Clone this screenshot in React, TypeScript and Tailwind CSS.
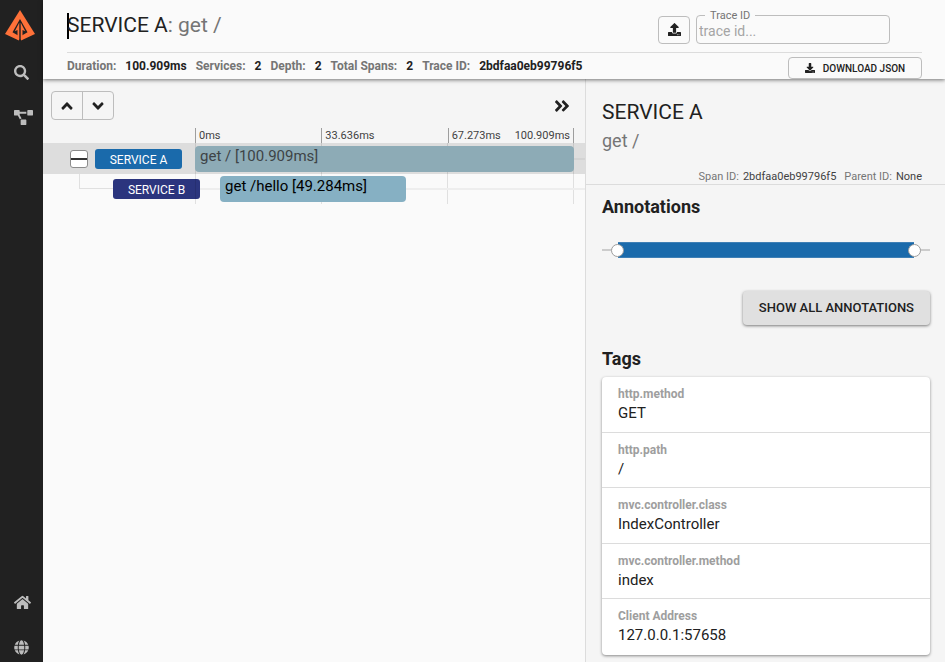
import React from "react";
import {
  FaAngleDoubleRight,
  FaAngleDown,
  FaAngleUp,
  FaDownload,
  FaGlobe,
  FaHome,
  FaProjectDiagram,
  FaSearch,
  FaUpload,
} from "react-icons/fa";

const summary = [
  { label: "Duration", value: "100.909ms" },
  { label: "Services", value: "2" },
  { label: "Depth", value: "2" },
  { label: "Total Spans", value: "2" },
  { label: "Trace ID", value: "2bdfaa0eb99796f5" },
];

const tags = [
  { key: "http.method", value: "GET" },
  { key: "http.path", value: "/" },
  { key: "mvc.controller.class", value: "IndexController" },
  { key: "mvc.controller.method", value: "index" },
  { key: "Client Address", value: "127.0.0.1:57658" },
];

function Logo() {
  return (
    <svg viewBox="0 0 30 31" className="h-[31px] w-[30px]" aria-hidden="true">
      <path fill="#fe7139" d="M15 0 L30 24 L16 30.500 V26 L22.500 22.300 L15 9 L7.500 22.300 L14 26 V30.500 L0 24 Z" />
      <path fill="#fe7139" d="M14.300 12.500 V29.500 H12.500 V20 L9.800 21.200 Z" />
      <path fill="#fe7139" d="M15.700 12.500 V29.500 H17.500 V20 L20.200 21.200 Z" />
    </svg>
  );
}

function Sidebar() {
  const link = "flex h-[45px] items-center pl-[14px] text-[#bdbdbd]";
  return (
    <nav className="flex w-[43px] shrink-0 flex-col justify-between bg-[#212121]">
      <div>
        <a href="#home" aria-label="Zipkin" className="flex h-[50px] items-center pl-[5px]">
          <Logo />
        </a>
        <a href="#search" aria-label="Search" className={link}>
          <FaSearch size={15} />
        </a>
        <a href="#dependencies" aria-label="Dependencies" className={link}>
          <FaProjectDiagram size={19} />
        </a>
      </div>
      <div className="-mb-2">
        <a href="#site" aria-label="Zipkin home page" className={link}>
          <FaHome size={17} />
        </a>
        <a href="#language" aria-label="Language" className={link}>
          <FaGlobe size={15} />
        </a>
      </div>
    </nav>
  );
}

function Header() {
  return (
    <header className="relative z-10 bg-[#fafafa] pr-[23px] pl-6 shadow-[0_1px_4px_rgba(0,0,0,0.55)]">
      <div className="flex h-[53px] items-center justify-between border-b border-[#dcdcdc] pr-8">
        <h1 className="flex h-[26px] items-center border-l-2 border-black text-[21px]">
          <span className="-ml-0.5">SERVICE A</span>
          <span className="whitespace-pre text-[#757575]">: get /</span>
        </h1>
        <div className="flex items-end gap-1.5">
          <button
            type="button"
            aria-label="Upload JSON"
            className="flex h-7 w-8 items-center justify-center rounded border border-[#bdbdbd]"
          >
            <FaUpload size={13} />
          </button>
          <fieldset className="h-[35px] w-[194px] rounded border border-[#bdbdbd] px-0">
            <legend className="ml-2 px-[5px] text-[11px] leading-[14px] text-[#757575]">
              <label htmlFor="trace-id">Trace ID</label>
            </legend>
            <input
              id="trace-id"
              type="text"
              placeholder="trace id..."
              className="block h-4 w-full bg-transparent px-0.5 text-sm leading-4 outline-none placeholder:text-[#a5a5a5]"
            />
          </fieldset>
        </div>
      </div>
      <div className="flex h-[26px] items-end justify-between">
        <dl className="flex gap-[9px] self-center text-xs font-bold">
          {summary.map((s) => (
            <div key={s.label} className="flex gap-[9px]">
              <dt className="text-[#757575]">{s.label}:</dt>
              <dd>{s.value}</dd>
            </div>
          ))}
        </dl>
        <button
          type="button"
          className="flex h-[22px] w-[134px] items-center justify-center gap-2 rounded border border-[#bdbdbd] text-[10px] font-medium"
        >
          <FaDownload size={10} />
          DOWNLOAD JSON
        </button>
      </div>
    </header>
  );
}

function GridLines() {
  return (
    <div className="absolute inset-0 grid grid-cols-3 border-r border-black/10">
      <span className="border-l border-black/10" />
      <span className="border-l border-black/10" />
      <span className="border-l border-black/10" />
    </div>
  );
}

function Timeline() {
  return (
    <section className="min-w-0 flex-1 bg-[#fafafa]">
      <div className="bg-[#f5f5f5]">
        <div className="flex items-center justify-between px-2 pt-3">
          <div className="flex h-[29px] divide-x divide-[#bdbdbd] rounded border border-[#bdbdbd]">
            <button type="button" aria-label="Previous span" className="flex w-[31px] items-center justify-center">
              <FaAngleUp size={18} />
            </button>
            <button type="button" aria-label="Next span" className="flex w-[30px] items-center justify-center">
              <FaAngleDown size={18} />
            </button>
          </div>
          <button type="button" aria-label="Hide details" className="px-1.5">
            <FaAngleDoubleRight size={18} />
          </button>
        </div>
        <div className="mr-[11px] ml-[152px] grid h-[23px] grid-cols-3 items-end pt-2 text-[11px] leading-[15px] text-[#424242]">
          <span className="border-l border-[#9e9e9e] pl-[3px]">0ms</span>
          <span className="border-l border-[#9e9e9e] pl-[3px]">33.636ms</span>
          <span className="flex justify-between border-x border-[#9e9e9e] px-[3px]">
            <span>67.273ms</span>
            <span>100.909ms</span>
          </span>
        </div>
      </div>

      <div className="flex h-[31px] bg-[#dddddd]">
        <div className="flex w-[152px] shrink-0 items-center gap-[7px] pl-[27px]">
          <button
            type="button"
            aria-label="Collapse children"
            className="flex h-[18px] w-[18px] items-center rounded-[3px] border border-[#8c8c8c] bg-white"
          >
            <span className="h-0.5 w-full bg-[#333333]" />
          </button>
          <span className="flex h-5 w-[87px] items-center justify-center rounded-[3px] bg-[#1a6aab] pt-0.5 text-xs text-white">
            SERVICE A
          </span>
        </div>
        <div className="relative mr-[11px] flex-1 py-[3px]">
          <GridLines />
          <div className="absolute top-[15px] -right-[11px] left-0 h-0.5 bg-[#d3d3d3]" />
          <div className="relative h-[26px] rounded bg-[#8dabb6] pl-[5px] text-[15px] leading-[20px] text-[#3d4346]">
            get / [100.909ms]
          </div>
        </div>
      </div>

      <div className="flex h-[30px]">
        <div className="flex w-[157px] shrink-0 pl-9">
          <span className="h-[15px] w-[34px] border-b border-l border-[#e0e0e0]" />
          <span className="mt-[5px] flex h-5 w-[87px] shrink-0 items-center justify-center rounded-[3px] bg-[#2b357e] pt-0.5 text-xs text-white">
            SERVICE B
          </span>
        </div>
        <div className="relative mr-[11px] -ml-[5px] flex-1 py-[2px]">
          <GridLines />
          <div className="absolute top-[14px] -right-[11px] left-[5px] h-0.5 bg-[#eeeeee]" />
          <div className="relative ml-[25px] h-[26px] w-[49%] rounded bg-[#86b0c3] pl-[5px] text-[15px] leading-[20px] text-black">
            get /hello [49.284ms]
          </div>
        </div>
      </div>
    </section>
  );
}

function RangeSlider() {
  const input =
    "pointer-events-none absolute inset-x-0 top-0 h-4 w-full appearance-none bg-transparent [&::-webkit-slider-thumb]:pointer-events-auto [&::-webkit-slider-thumb]:h-[13px] [&::-webkit-slider-thumb]:w-[13px] [&::-webkit-slider-thumb]:appearance-none [&::-webkit-slider-thumb]:rounded-full [&::-webkit-slider-thumb]:border [&::-webkit-slider-thumb]:border-[#9e9e9e] [&::-webkit-slider-thumb]:bg-white";
  return (
    <div className="relative mt-[23px] flex h-4 items-center">
      <div className="h-0.5 w-full bg-[#cccccc]" />
      <div className="absolute inset-x-4 inset-y-0 border-y border-[#3e7fb5] bg-[#1a6aab]" />
      <input type="range" aria-label="Range start" min={0} max={100} defaultValue={3} className={input} />
      <input type="range" aria-label="Range end" min={0} max={100} defaultValue={97} className={input} />
    </div>
  );
}

function Details() {
  return (
    <aside className="w-[360px] shrink-0 border-l border-[#dcdcdc] bg-[#f5f5f5]">
      <div className="border-b border-[#dcdcdc] pt-5 pr-[23px] pl-4">
        <h2 className="text-[21px] leading-[26px]">SERVICE A</h2>
        <p className="mt-1 text-lg leading-6 text-[#757575]">get /</p>
        <dl className="mt-4 flex justify-end gap-2 text-[11px] leading-[15px]">
          <div className="flex gap-1">
            <dt className="text-[#757575]">Span ID:</dt>
            <dd className="text-[#424242]">2bdfaa0eb99796f5</dd>
          </div>
          <div className="flex gap-1">
            <dt className="text-[#757575]">Parent ID:</dt>
            <dd className="text-[#424242]">None</dd>
          </div>
        </dl>
      </div>
      <div className="pt-2.5 pr-[15px] pl-4">
        <h3 className="text-lg leading-6 font-bold">Annotations</h3>
        <RangeSlider />
        <div className="mt-[33px] flex justify-end">
          <button
            type="button"
            className="h-[34px] rounded bg-[#e0e0e0] px-4 text-[13px] font-medium shadow-[0_1px_3px_rgba(0,0,0,0.5)]"
          >
            SHOW ALL ANNOTATIONS
          </button>
        </div>
        <h3 className="mt-[22px] text-lg leading-6 font-bold">Tags</h3>
        <dl className="mt-[6px] grid min-h-[278px] auto-rows-fr divide-y divide-[#dcdcdc] rounded bg-white shadow-[0_1px_3px_rgba(0,0,0,0.45)]">
          {tags.map((t) => (
            <div key={t.key} className="px-4 pt-2">
              <dt className="text-xs leading-[18px] font-bold text-[#9e9e9e]">{t.key}</dt>
              <dd className="text-[15px] leading-5">{t.value}</dd>
            </div>
          ))}
        </dl>
      </div>
    </aside>
  );
}

export default function App() {
  return (
    <div className="flex min-h-screen bg-[#fafafa] font-['Roboto',sans-serif] text-[#212121]">
      <Sidebar />
      <div className="flex min-w-0 flex-1 flex-col">
        <Header />
        <main className="flex flex-1">
          <Timeline />
          <Details />
        </main>
      </div>
    </div>
  );
}
